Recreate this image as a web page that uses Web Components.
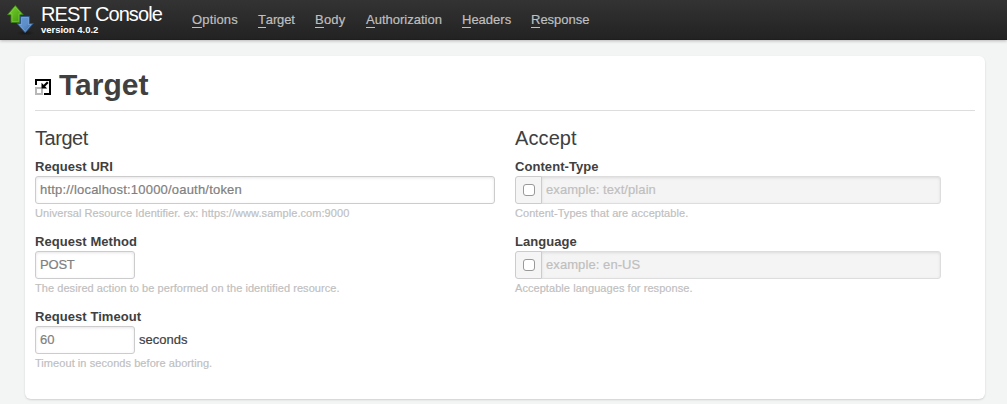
<!DOCTYPE html>
<html lang="en">
<head>
<meta charset="utf-8">
<title>REST Console</title>
<style>
body { margin: 0; height: 404px; overflow: hidden; background: #f3f5f4; color: #404040; font: 13px/18px "Liberation Sans", Arial, sans-serif; }
</style>
</head>
<body>
<rest-console></rest-console>
<script>
const define = (name, html) => customElements.define(name, class extends HTMLElement {
  constructor() {
    super();
    const t = document.createElement('template');
    t.innerHTML = html;
    this.attachShadow({ mode: 'open' }).append(t.content.cloneNode(true));
  }
});

define('nav-link', `
<style>
:host { display: block; flex: none; color: #bfbfbf; line-height: 14px; white-space: nowrap; -webkit-text-stroke: .2px; }
.key { display: inline-block; border-bottom: 1px solid #bfbfbf; height: 14px; }
</style><span class="key"><slot name="key"></slot></span><slot></slot>`);

define('arrows-logo', `
<style>:host { display: block; width: 28px; height: 32px; } svg { display: block; }</style>
<svg width="28" height="32" viewBox="0 0 28 32">
  <defs>
    <linearGradient id="g" x2="1" y2="1"><stop offset="0" stop-color="#78d536"/><stop offset=".5" stop-color="#5cb51c"/><stop offset="1" stop-color="#3c8d0c"/></linearGradient>
    <linearGradient id="b" x2="1" y2="1"><stop offset="0" stop-color="#5d91cb"/><stop offset=".5" stop-color="#5f8fca"/><stop offset="1" stop-color="#2e619f"/></linearGradient>
    <radialGradient id="s"><stop offset="0" stop-color="#000" stop-opacity=".4"/><stop offset="1" stop-color="#000" stop-opacity="0"/></radialGradient>
  </defs>
  <ellipse cx="18.5" cy="28" rx="9" ry="2.6" fill="url(#s)"/>
  <path d="M8.3 .6 16.2 9.7H12.8V17.4H4V9.7H.5Z" fill="url(#g)" stroke="#3b8612" stroke-width=".8"/>
  <path d="M8.3 1.9 14.2 8.8H11.8V16.4H5V8.8H2.5Z" fill="none" stroke="#9be35f" stroke-opacity=".6" stroke-width=".7"/>
  <path d="M13.6 11.5H22.4V18.5H26.3L18.2 27.8 10.1 18.5H13.6Z" fill="url(#b)" stroke="#28558e" stroke-width=".8"/>
  <path d="M14.6 12.4H21.4V19.5H24.2L18.2 26.4 12.2 19.5H14.6Z" fill="none" stroke="#9bc0e8" stroke-opacity=".55" stroke-width=".7"/>
</svg>`);

define('top-bar', `
<style>
:host { display: flex; height: 40px; box-sizing: border-box; background: linear-gradient(#333, #222); box-shadow: 0 1px 3px rgba(0,0,0,.25), inset 0 -1px 0 rgba(0,0,0,.1); }
arrows-logo { margin: 5px 6px 0 7px; }
.brand { width: 151px; color: #fff; white-space: nowrap; }
.name { font-size: 20px; line-height: 22px; margin-top: 3px; letter-spacing: -.92px; }
.version { font-size: 9.5px; font-weight: bold; line-height: 10px; letter-spacing: -.02px; }
nav { display: flex; gap: 20px; padding-top: 13px; }
</style>
<arrows-logo></arrows-logo>
<div class="brand"><div class="name">REST Console</div><div class="version">version 4.0.2</div></div>
<nav>
<nav-link style="width:46px;letter-spacing:.15px"><span slot="key">O</span>ptions</nav-link>
<nav-link style="width:37px;letter-spacing:-.15px"><span slot="key">T</span>arget</nav-link>
<nav-link style="width:31px;letter-spacing:.2px"><span slot="key">B</span>ody</nav-link>
<nav-link style="width:76px"><span slot="key">A</span>uthorization</nav-link>
<nav-link style="width:49px"><span slot="key">H</span>eaders</nav-link>
<nav-link style="width:59px"><span slot="key">R</span>esponse</nav-link>
</nav>`);

define('resize-icon', `
<style>:host { display: block; width: 16px; height: 16px; } svg { display: block; }</style>
<svg width="16" height="16" viewBox="0 0 16 16">
  <path d="M1 6V1H15V15H9" fill="none" stroke="#000" stroke-width="2"/>
  <path d="M1 8V15H7V9H0" fill="none" stroke="#b8b8b8" stroke-width="2"/>
  <path d="M12.8 3.2 9 7" stroke="#000" stroke-width="2.2"/>
  <path d="M6.5 3.8V9.5H12.2Z" fill="#000"/>
</svg>`);

define('text-box', `
<style>
:host { display: block; box-sizing: border-box; height: 28px; padding: 4px; border: 1px solid #ccc; border-radius: 3px; background: #fff; color: #808080; line-height: 18px; white-space: nowrap; box-shadow: inset 0 1px 3px rgba(0,0,0,.1); -webkit-text-stroke: .2px; }
:host([disabled]) { background: #f4f4f4; color: #bfbfbf; border-color: #ddd; }
</style><slot></slot>`);

define('check-addon', `
<style>
:host { display: flex; }
.box { box-sizing: border-box; width: 27px; height: 28px; border: 1px solid #ccc; border-radius: 3px 0 0 3px; background: #f5f5f5; display: grid; place-items: center; margin-right: -1px; z-index: 1; }
.tick { box-sizing: border-box; width: 12px; height: 12px; border: 1px solid #999; border-radius: 3px; background: #fff; }
text-box { width: 400px; border-radius: 0 3px 3px 0; letter-spacing: .08px; }
</style><div class="box"><div class="tick"></div></div><text-box disabled><slot></slot></text-box>`);

define('form-field', `
<style>
:host { display: block; height: 75px; }
.label { font-weight: bold; height: 18px; line-height: 18px; letter-spacing: .06px; }
.row { display: flex; align-items: center; gap: 4px; -webkit-text-stroke: .2px; }
.help { font-size: 11px; line-height: 18px; color: #bfbfbf; white-space: nowrap; letter-spacing: .06px; -webkit-text-stroke: .2px; }
</style>
<div class="label"><slot name="label"></slot></div>
<div class="row"><slot></slot></div>
<div class="help"><slot name="help"></slot></div>`);

define('field-group', `
<style>
:host { display: block; width: 460px; }
h3 { margin: 0 0 1px; font-size: 20px; line-height: 35px; height: 36px; font-weight: normal; }
</style><h3><slot name="title"></slot></h3><slot></slot>`);

define('panel-card', `
<style>
:host { display: block; box-sizing: border-box; width: 960px; height: 343px; margin: 16px 0 0 25px; padding: 10px; background: #fff; border-radius: 6px; box-shadow: 0 1px 2px rgba(0,0,0,.15); }
header { display: flex; height: 44px; border-bottom: 1px solid #ddd; margin-bottom: 10px; }
resize-icon { margin: 13px 8px 0 0; }
h1 { margin: 0; font-size: 30px; line-height: 38px; font-weight: bold; }
.columns { display: flex; gap: 20px; }
</style>
<header><resize-icon></resize-icon><h1><slot name="title"></slot></h1></header>
<div class="columns"><slot></slot></div>`);

define('rest-console', `
<style>
:host { display: block; }
</style>
<top-bar></top-bar>
<panel-card>
  <span slot="title">Target</span>
  <field-group><span slot="title" style="letter-spacing:-.45px">Target</span>
    <form-field><span slot="label">Request URI</span><text-box style="width:460px;letter-spacing:.2px">http://localhost:10000/oauth/token</text-box><span slot="help">Universal Resource Identifier. ex: https://www.sample.com:9000</span></form-field>
    <form-field><span slot="label">Request Method</span><text-box style="width:100px;letter-spacing:-.2px">POST</text-box><span slot="help">The desired action to be performed on the identified resource.</span></form-field>
    <form-field><span slot="label">Request Timeout</span><text-box style="width:100px">60</text-box><span>seconds</span><span slot="help">Timeout in seconds before aborting.</span></form-field>
  </field-group>
  <field-group><span slot="title" style="letter-spacing:.1px">Accept</span>
    <form-field><span slot="label">Content-Type</span><check-addon>example: text/plain</check-addon><span slot="help">Content-Types that are acceptable.</span></form-field>
    <form-field><span slot="label">Language</span><check-addon>example: en-US</check-addon><span slot="help">Acceptable languages for response.</span></form-field>
  </field-group>
</panel-card>`);
</script>
</body>
</html>
